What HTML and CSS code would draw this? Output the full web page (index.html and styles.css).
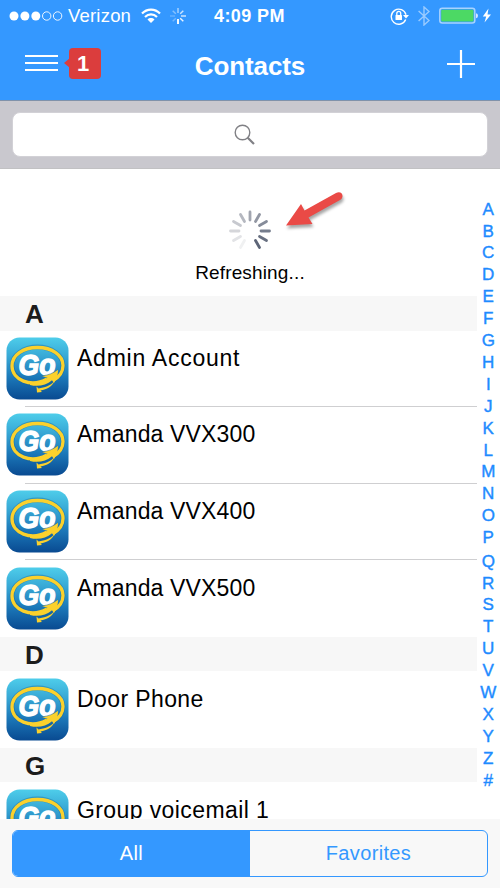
FILE: index.html
```html
<!DOCTYPE html>
<html lang="en">
<head>
<meta charset="utf-8">
<title>Contacts</title>
<link rel="stylesheet" href="styles.css">
</head>
<body>
<svg class="defs" width="0" height="0" aria-hidden="true">
  <defs>
    <linearGradient id="sky" x1="0" y1="0" x2="0" y2="1">
      <stop offset="0" stop-color="#4ecdea"/>
      <stop offset=".3" stop-color="#38a9d6"/>
      <stop offset=".65" stop-color="#1b77b8"/>
      <stop offset="1" stop-color="#094a91"/>
    </linearGradient>
    <symbol id="go" viewBox="0 0 63 63">
      <rect x=".5" y=".5" width="62" height="62" rx="13" fill="url(#sky)"/>
      <ellipse cx="31.500" cy="28.500" rx="25.500" ry="18.500" fill="none" stroke="#135f94" stroke-opacity=".4" stroke-width="4.800"/>
      <path d="M41 42C25 51 6 43 6 29C6 18 17 10.500 31.500 10.500C46 10.500 57 18 57 28.500C57 35 52.500 40.500 47 43.500" fill="none" stroke="#fbd12c" stroke-width="3.300"/>
      <text class="go-text" x="12.500" y="38" textLength="37" lengthAdjust="spacingAndGlyphs">Go</text>
      <path d="M24 45.500C32 46 37 44.500 41.500 40.800L36 39C42 38 47 36.500 52 32.500C52 37.500 51 41.500 48 46L46 43.200C40 48.500 32 50 24 48Z" fill="#fbd12c"/>
      <path d="M48.500 44C44 49 39 50.500 32.500 51.500L30.500 49.500L31 55.500L36 55L34.500 53.500C41 52.500 46 49.500 48.500 44Z" fill="#fbd12c"/>
      <path d="M36 39C42 38 47 36.500 52 32.500" fill="none" stroke="#1c659b" stroke-width=".5"/>
    </symbol>
  </defs>
</svg>
<div class="screen">
  <header class="top">
    <div class="status">
      <svg class="signal" width="54" height="12" viewBox="0 0 54 12">
        <g fill="#fff"><circle cx="5" cy="6" r="4.500"/><circle cx="15.900" cy="6" r="4.500"/><circle cx="26.800" cy="6" r="4.500"/></g>
        <g fill="none" stroke="#fff" stroke-width=".9"><circle cx="37.700" cy="6" r="4.200"/><circle cx="48.600" cy="6" r="4.200"/></g>
      </svg>
      <span class="carrier">Verizon</span>
      <svg class="wifi" width="20" height="16" viewBox="0 0 20 16">
        <g fill="none" stroke="#fff" stroke-width="2.200"><path d="M1 5.500C6 .2 14 .2 19 5.500"/><path d="M4 9C7.500 5.500 12.500 5.500 16 9"/></g>
        <path d="M6.500 11.500C8.500 9.600 11.500 9.600 13.500 11.500L10 15Z" fill="#fff"/>
      </svg>
      <svg class="activity" width="16" height="16" viewBox="-8 -8 16 16" stroke="#fff" stroke-width="1.400">
        <path d="M0 3V8" stroke-width="1.900"/><path d="M2.200 2.200L5.300 5.300" opacity=".9"/><path d="M3 0H8" opacity=".8"/><path d="M2.200-2.200L5.300-5.300" opacity=".75"/><path d="M0-3V-8" opacity=".6"/><path d="M-2.200-2.200L-5.300-5.300" opacity=".4"/><path d="M-3 0H-8" opacity=".25"/><path d="M-2.200 2.200L-5.300 5.300" opacity=".3"/>
      </svg>
      <span class="time">4:09 PM</span>
      <svg class="lock" width="20" height="18" viewBox="0 0 20 18">
        <path d="M15.700 12.500A7.500 7.500 0 1 1 16 7.800" fill="none" stroke="#fff" stroke-width="1.400"/>
        <path d="M13 8H19L16 11.600Z" fill="#fff"/><rect x="5.500" y="8" width="6.500" height="5" rx=".5" fill="#fff"/>
        <path d="M6.800 8V6.300A1.950 1.950 0 0 1 10.700 6.300V8" fill="none" stroke="#fff" stroke-width="1.300"/>
      </svg>
      <svg class="bluetooth" width="12" height="20" viewBox="0 0 12 20"><path d="M.6 5L11 14.500L6 19V1L11 5.500L.6 15" fill="none" stroke="#9acbff" stroke-width="1.400"/></svg>
      <svg class="battery" width="53" height="18" viewBox="0 0 53 18">
        <rect x=".8" y="1.300" width="35" height="14.700" rx="2.500" fill="none" stroke="#a8d2ff" stroke-width="1.500"/>
        <rect x="2.200" y="2.700" width="32.300" height="11.800" rx="1" fill="#4cd964"/>
        <path d="M37 6.200Q39 6.500 39 8.700Q39 11 37 11.300Z" fill="#d5e9ff"/>
        <path d="M49.500 1.500L43.800 9.500H47.200L45.500 15.500L52 7.500H48.500Z" fill="#fff"/>
      </svg>
    </div>
    <nav class="nav">
      <div class="menu">
        <svg width="33" height="18" viewBox="0 0 33 18"><path d="M0 2H33M0 9H33M0 16H33" stroke="#fff" stroke-width="2"/></svg>
        <span class="badge">1</span>
      </div>
      <h1 class="title">Contacts</h1>
      <svg class="add" width="28" height="28" viewBox="0 0 28 28"><path d="M14 0V28M0 14H28" stroke="#fff" stroke-width="2.200"/></svg>
    </nav>
  </header>
  <div class="search">
    <div class="field">
      <svg width="22" height="22" viewBox="0 0 22 22" fill="none" stroke="#808085"><circle cx="8.500" cy="8.500" r="7.300" stroke-width="1.400"/><path d="M13.700 13.700L20 20" stroke-width="2.200"/></svg>
    </div>
  </div>
  <main class="body">
    <div class="list">
      <div class="refresh">
        <svg class="spinner" width="44" height="42" viewBox="-22 -21 44 42" stroke-width="2.800" stroke-linecap="round">
          <path d="M0-11V-19" stroke="#a2a6b0"/><path d="M5.500-9.500L9.500-16.500" stroke="#9297a3"/><path d="M9.500-5.500L16.500-9.500" stroke="#858b99"/><path d="M11 0H19.500" stroke="#757d8d"/><path d="M9.500 5.500L16.500 9.500" stroke="#687081"/><path d="M5.500 9.500L9.500 16.500" stroke="#5d6577"/>
          <path d="M-5.500 9.500L-9.500 16.500" stroke="#f0f1f2"/><path d="M-9.500 5.500L-16.500 9.500" stroke="#e2e3e6"/><path d="M-11 0H-19.500" stroke="#d5d6da"/><path d="M-9.500-5.500L-16.500-9.500" stroke="#c7c9cf"/><path d="M-5.500-9.500L-9.500-16.500" stroke="#b5b8c0"/>
        </svg>
        <svg class="arrow" width="66" height="46" viewBox="0 0 66 46"><path d="M5 35.500L20 14L23.500 20.500L55 3C61 0 64 7 59 10L27.500 27.500L31.500 34Z" fill="#ea4a46"/></svg>
        <span class="refresh-label">Refreshing...</span>
      </div>
      <h2 class="section">A</h2>
      <div class="row"><svg class="avatar"><use href="#go"/></svg><span class="name wide">Admin Account</span></div>
      <div class="row"><svg class="avatar"><use href="#go"/></svg><span class="name">Amanda VVX300</span></div>
      <div class="row"><svg class="avatar"><use href="#go"/></svg><span class="name">Amanda VVX400</span></div>
      <div class="row last"><svg class="avatar"><use href="#go"/></svg><span class="name">Amanda VVX500</span></div>
      <h2 class="section">D</h2>
      <div class="row last"><svg class="avatar"><use href="#go"/></svg><span class="name loose">Door Phone</span></div>
      <h2 class="section">G</h2>
      <div class="row last"><svg class="avatar"><use href="#go"/></svg><span class="name loose">Group voicemail 1</span></div>
    </div>
    <div class="index">
      <span>A</span><span>B</span><span>C</span><span>D</span><span>E</span><span>F</span><span>G</span><span>H</span><span>I</span><span>J</span><span>K</span><span>L</span><span>M</span><span>N</span><span>O</span><span>P</span><span class="shift">Q</span><span>R</span><span>S</span><span>T</span><span>U</span><span>V</span><span>W</span><span>X</span><span>Y</span><span>Z</span><span>#</span>
    </div>
  </main>
  <footer class="toolbar">
    <div class="segments"><span class="segment selected">All</span><span class="segment">Favorites</span></div>
  </footer>
</div>
</body>
</html>
```
FILE: styles.css
```css
* { box-sizing: border-box; }
body { margin: 0; background: #fff; font-family: "Liberation Sans", Arial, sans-serif; color: #000; }
.defs { position: absolute; }
.screen { width: 500px; height: 888px; display: flex; flex-direction: column; overflow: hidden; }
svg { display: block; flex: none; }

.top { height: 101px; flex: none; background: #3498ff; border-bottom: 1px solid #8092aa; color: #fff; }
.status { height: 32px; display: flex; align-items: center; padding-left: 9px; white-space: nowrap; }
.carrier { width: 65px; margin-left: 5px; font-size: 18.500px; letter-spacing: .2px; }
.wifi { margin-left: 8px; }
.activity { margin-left: 9px; }
.time { width: 74px; margin-left: 28px; font-size: 18px; font-weight: bold; letter-spacing: .4px; }
.lock { margin-left: 102px; }
.bluetooth { margin-left: 8px; }
.battery { margin-left: 9px; }

.nav { height: 68px; display: grid; grid-template-columns: 150px 200px 150px; align-items: center; }
.menu { display: flex; align-items: center; padding-left: 25px; gap: 11px; margin-top: -6px; }
.badge { position: relative; width: 32px; height: 31px; border-radius: 4px; background: #db3d3d; font-size: 22px; font-weight: bold; line-height: 31px; padding-left: 8px; }
.badge::before { content: ""; position: absolute; left: -5px; top: 10px; border: solid transparent; border-width: 5.500px 6px 5.500px 0; border-right-color: #db3d3d; }
.title { margin: 0; text-align: center; font-size: 26px; line-height: 30px; letter-spacing: -.1px; }
.add { justify-self: end; margin-right: 25px; margin-top: -5px; }

.search { height: 68px; flex: none; padding: 11px 12px 11px; background: #c9c8ce; border-bottom: 1px solid #c1c1c3; }
.field { height: 45px; border: 1px solid #d2d1d6; border-radius: 8px; background: #fff; display: flex; align-items: center; padding-left: 221px; }

.body { flex: 1; min-height: 0; display: flex; overflow: hidden; }
.list { width: 476.500px; flex: none; }
.refresh { position: relative; height: 127px; padding: 41px 0 0 23.500px; display: flex; flex-direction: column; align-items: center; }
.arrow { position: absolute; left: 281px; top: 21px; filter: drop-shadow(1px 3px 1.500px rgba(0, 0, 0, .35)); }
.refresh-label { margin-top: 10px; font-size: 19px; line-height: 22px; letter-spacing: .15px; }
.section { margin: 0; height: 34.500px; padding-left: 25px; background: #f7f7f7; color: #1c1c1c; font-size: 26px; line-height: 37px; }
.row { position: relative; height: 76.600px; display: flex; align-items: flex-start; padding: 6.300px 0 0 6px; }
.row:not(.last)::after { content: ""; position: absolute; left: 25px; right: 0; bottom: 0; height: 1px; background: #cfcfd1; }
.avatar { width: 63px; height: 63px; }
.name { margin-left: 8px; font-size: 23px; line-height: 26px; padding-top: 8px; letter-spacing: .15px; white-space: nowrap; }
.name.wide { letter-spacing: .75px; }
.name.loose { letter-spacing: .4px; }
.go-text { font: italic bold 29px "Liberation Sans", Arial, sans-serif; fill: #fff; stroke: #fff; stroke-width: 1.400px; }

.index { flex: 1; display: flex; flex-direction: column; align-items: center; padding-top: 29.600px; color: #1e8bff; font-size: 17px; -webkit-text-stroke: .4px #1e8bff; }
.index span { height: 21.920px; line-height: 22px; flex: none; }
.index .shift { margin-top: 1.500px; }

.toolbar { height: 69px; flex: none; padding: 11px 12px; background: #f8f8f8; }
.segments { height: 47px; display: flex; border: 1.500px solid #3498ff; border-radius: 6px; overflow: hidden; }
.segment { flex: 1; display: flex; align-items: center; justify-content: center; font-size: 20px; color: #3498ff; letter-spacing: .35px; }
.selected { background: #3498ff; color: #fff; }
```
